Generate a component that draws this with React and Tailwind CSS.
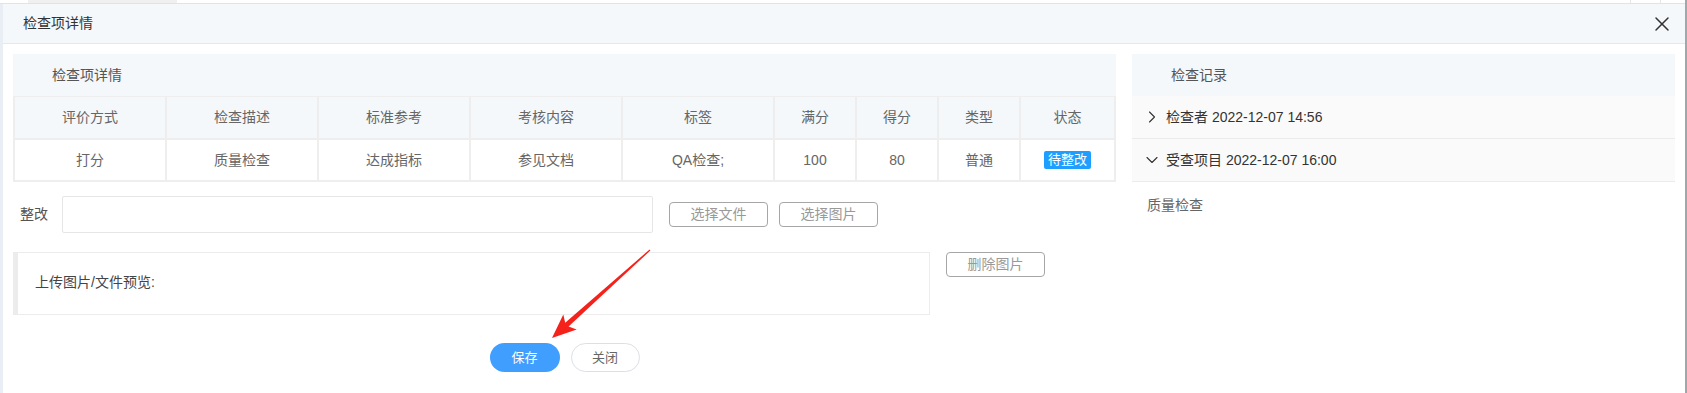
import { X, ChevronRight, ChevronDown } from 'lucide-react'

const font = { fontFamily: '"Liberation Sans", "Noto Sans CJK SC", sans-serif' }

const headers = ['评价方式', '检查描述', '标准参考', '考核内容', '标签', '满分', '得分', '类型', '状态']
const values = ['打分', '质量检查', '达成指标', '参见文档', 'QA检查;', '100', '80', '普通']

function Arrow() {
  return (
    <svg className="absolute left-0 top-0 pointer-events-none" width="1687" height="393">
      <polygon
        points="552,338 563.3,314.6 565.2,322.7 649.6,249.5 650.4,250.5 568.6,326.5 576.7,329.4"
        fill="#f5221b"
      />
    </svg>
  )
}

function OutlineButton({ children, className = '' }) {
  return (
    <button className={`h-[25px] w-[99px] rounded-[4px] border border-[#a6a6a6] bg-white text-[14px] text-[#999] ${className}`}>
      {children}
    </button>
  )
}

function DetailCard() {
  return (
    <div>
      <div className="h-[42px] bg-[#f4f8fb] pl-[39px] flex items-center text-[14px] text-[#555]">检查项详情</div>
      <div className="grid grid-cols-[150px_150px_150px_150px_150px_80px_80px_80px_93px] gap-[2px] bg-[#eeeeee] p-[2px] pt-[1px] text-[14px] text-[#666]">
        {headers.map((h) => (
          <div key={h} className="h-[41px] bg-[#f4f8fb] flex items-center justify-center">{h}</div>
        ))}
        {values.map((v, i) => (
          <div key={i} className="h-[40px] bg-white flex items-center justify-center">{v}</div>
        ))}
        <div className="h-[40px] bg-white flex items-center justify-center">
          <span className="h-[18px] px-[4px] rounded-[2px] bg-[#1e9fff] text-white text-[13px] leading-[18px]">待整改</span>
        </div>
      </div>
    </div>
  )
}

function RecordCard() {
  return (
    <div className="w-[543px]">
      <div className="h-[42px] bg-[#f4f8fb] pl-[39px] flex items-center text-[14px] text-[#555]">检查记录</div>
      <div className="h-[43px] bg-[#fafafa] border-b border-[#ebebeb] flex items-center pl-[10px] text-[14px] text-[#333]">
        <ChevronRight size={20} strokeWidth={1.3} className="mr-[4px]" />
        检查者 2022-12-07 14:56
      </div>
      <div className="h-[43px] bg-[#fafafa] border-b border-[#ebebeb] flex items-center pl-[10px] text-[14px] text-[#333]">
        <ChevronDown size={20} strokeWidth={1.3} className="mr-[4px]" />
        受查项目 2022-12-07 16:00
      </div>
      <div className="pl-[15px] pt-[13px] text-[14px] text-[#666]">质量检查</div>
    </div>
  )
}

export default function App() {
  return (
    <div className="relative w-[1687px] h-[393px] overflow-hidden bg-white flex" style={font}>
      <div className="flex-1 flex flex-col">
        <div className="h-[4px] flex border-b border-[#e3e3e3]">
          <div className="w-[28px] bg-white" />
          <div className="w-[149px] bg-[#f0f0f0]" />
          <div className="flex-1 bg-white" />
          <div className="w-[30px] border-l border-[#e6e6e6]" />
          <div className="w-[25px] border-l border-[#e6e6e6]" />
        </div>
        <div className="flex flex-1">
          <div className="w-[3px] bg-[#e9edf4]" />
          <div className="flex-1 flex flex-col">
            <div className="h-[40px] bg-[#f4f8fb] border-b border-[#e8e8e8] flex items-center justify-between pl-[20px] pr-[11px] text-[14px] text-[#333]">
              <span>检查项详情</span>
              <X size={24} strokeWidth={1.5} color="#333" />
            </div>
            <div className="flex flex-1 pt-[10px] pl-[10px] pr-[10px] gap-[16px]">
              <div className="w-[1103px] flex flex-col">
                <DetailCard />
                <div className="flex items-center mt-[14px]">
                  <span className="w-[49px] pl-[7px] text-[14px] text-[#555]">整改</span>
                  <div className="w-[591px] h-[37px] border border-[#e6e6e6] rounded-[2px] bg-white" />
                  <OutlineButton className="ml-[16px]">选择文件</OutlineButton>
                  <OutlineButton className="ml-[11px]">选择图片</OutlineButton>
                </div>
                <div className="flex items-start mt-[19px]">
                  <div className="w-[917px] h-[63px] border border-[#ececec] border-l-[5px] pl-[17px] pt-[19px] text-[14px] text-[#444]">
                    上传图片/文件预览:
                  </div>
                  <OutlineButton className="ml-[16px]">删除图片</OutlineButton>
                </div>
                <div className="flex justify-center gap-[11px] mt-[28px]">
                  <button className="w-[70px] h-[29px] rounded-full bg-[#409eff] text-white text-[13px]">保存</button>
                  <button className="w-[69px] h-[29px] rounded-full border border-[#dcdfe6] bg-white text-[#666] text-[13px]">关闭</button>
                </div>
              </div>
              <RecordCard />
            </div>
          </div>
        </div>
      </div>
      <div className="w-[2px] bg-[#9fa8ab]" />
      <Arrow />
    </div>
  )
}
